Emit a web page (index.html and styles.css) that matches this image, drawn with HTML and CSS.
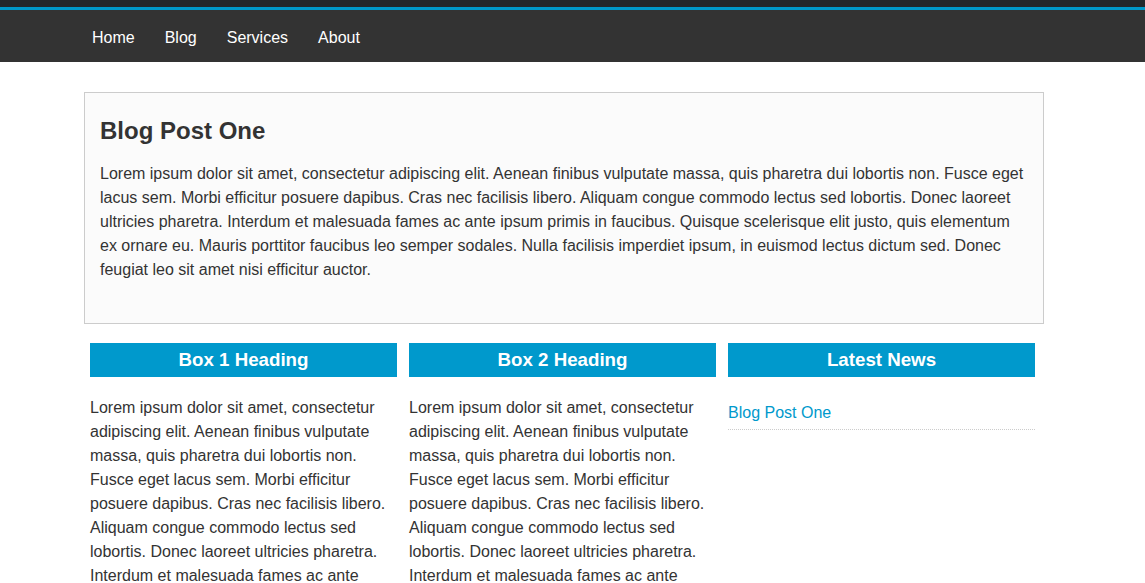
FILE: index.html
```html
<!DOCTYPE html>
<html lang="en">
<head>
<meta charset="utf-8">
<title>Blog</title>
<link rel="stylesheet" href="styles.css">
</head>
<body>
<div class="topstrip"></div>
<header class="navbar">
  <div class="wrap">
    <nav class="nav">
      <a href="#">Home</a>
      <a href="#">Blog</a>
      <a href="#">Services</a>
      <a href="#">About</a>
    </nav>
  </div>
</header>
<main class="wrap">
  <article class="post">
    <h2>Blog Post One</h2>
    <p>Lorem ipsum dolor sit amet, consectetur adipiscing elit. Aenean finibus vulputate massa, quis pharetra dui lobortis non. Fusce eget lacus sem. Morbi efficitur posuere dapibus. Cras nec facilisis libero. Aliquam congue commodo lectus sed lobortis. Donec laoreet ultricies pharetra. Interdum et malesuada fames ac ante ipsum primis in faucibus. Quisque scelerisque elit justo, quis elementum ex ornare eu. Mauris porttitor faucibus leo semper sodales. Nulla facilisis imperdiet ipsum, in euismod lectus dictum sed. Donec feugiat leo sit amet nisi efficitur auctor.</p>
  </article>
  <section class="boxes">
    <div class="box">
      <h3>Box 1 Heading</h3>
      <p>Lorem ipsum dolor sit amet, consectetur adipiscing elit. Aenean finibus vulputate massa, quis pharetra dui lobortis non. Fusce eget lacus sem. Morbi efficitur posuere dapibus. Cras nec facilisis libero. Aliquam congue commodo lectus sed lobortis. Donec laoreet ultricies pharetra. Interdum et malesuada fames ac ante ipsum primis in faucibus.</p>
    </div>
    <div class="box">
      <h3>Box 2 Heading</h3>
      <p>Lorem ipsum dolor sit amet, consectetur adipiscing elit. Aenean finibus vulputate massa, quis pharetra dui lobortis non. Fusce eget lacus sem. Morbi efficitur posuere dapibus. Cras nec facilisis libero. Aliquam congue commodo lectus sed lobortis. Donec laoreet ultricies pharetra. Interdum et malesuada fames ac ante ipsum primis in faucibus.</p>
    </div>
    <div class="box">
      <h3>Latest News</h3>
      <ul class="news">
        <li><a href="#">Blog Post One</a></li>
      </ul>
    </div>
  </section>
</main>
</body>
</html>
```
FILE: styles.css
```css
html, body {
  margin: 0;
  padding: 0;
}
body {
  font-family: "Liberation Sans", Arial, sans-serif;
  font-size: 16px;
  line-height: 24px;
  color: #333;
  background: #fff;
}
.topstrip {
  height: 7px;
  background: #23282d;
}
.navbar {
  background: #333;
  border-top: 3px solid #0099cc;
  height: 52px;
}
.wrap {
  width: 960px;
  margin-left: calc((100% - 977px) / 2);
}
.nav {
  display: flex;
  gap: 30px;
  padding: 3px 0 0 8px;
  height: 49px;
  align-items: center;
}
.nav a {
  color: #fff;
  text-decoration: none;
  font-size: 16px;
}
main.wrap {
  padding-top: 30px;
}
.post {
  border: 1px solid #ccc;
  background: #fbfbfb;
  padding: 20px 15px 25px;
}
.post h2 {
  margin: 0 0 13px;
  font-size: 24px;
  line-height: 36px;
  font-weight: bold;
}
.post p {
  margin: 0 0 16px;
}
.boxes {
  display: grid;
  grid-template-columns: 307px 307px 307px;
  gap: 12px;
  padding-left: 6px;
  margin-top: 19px;
}
.box h3 {
  margin: 0;
  background: #0099cc;
  color: #fff;
  text-align: center;
  font-size: 18.72px;
  line-height: 34px;
  height: 34px;
}
.box p {
  margin: 19px 0 0;
}
.news {
  list-style: none;
  margin: 24px 0 0;
  padding: 0;
}
.news li {
  border-bottom: 1px dotted #ccc;
  padding-bottom: 4px;
}
.news a {
  color: #0099cc;
  text-decoration: none;
}
```
